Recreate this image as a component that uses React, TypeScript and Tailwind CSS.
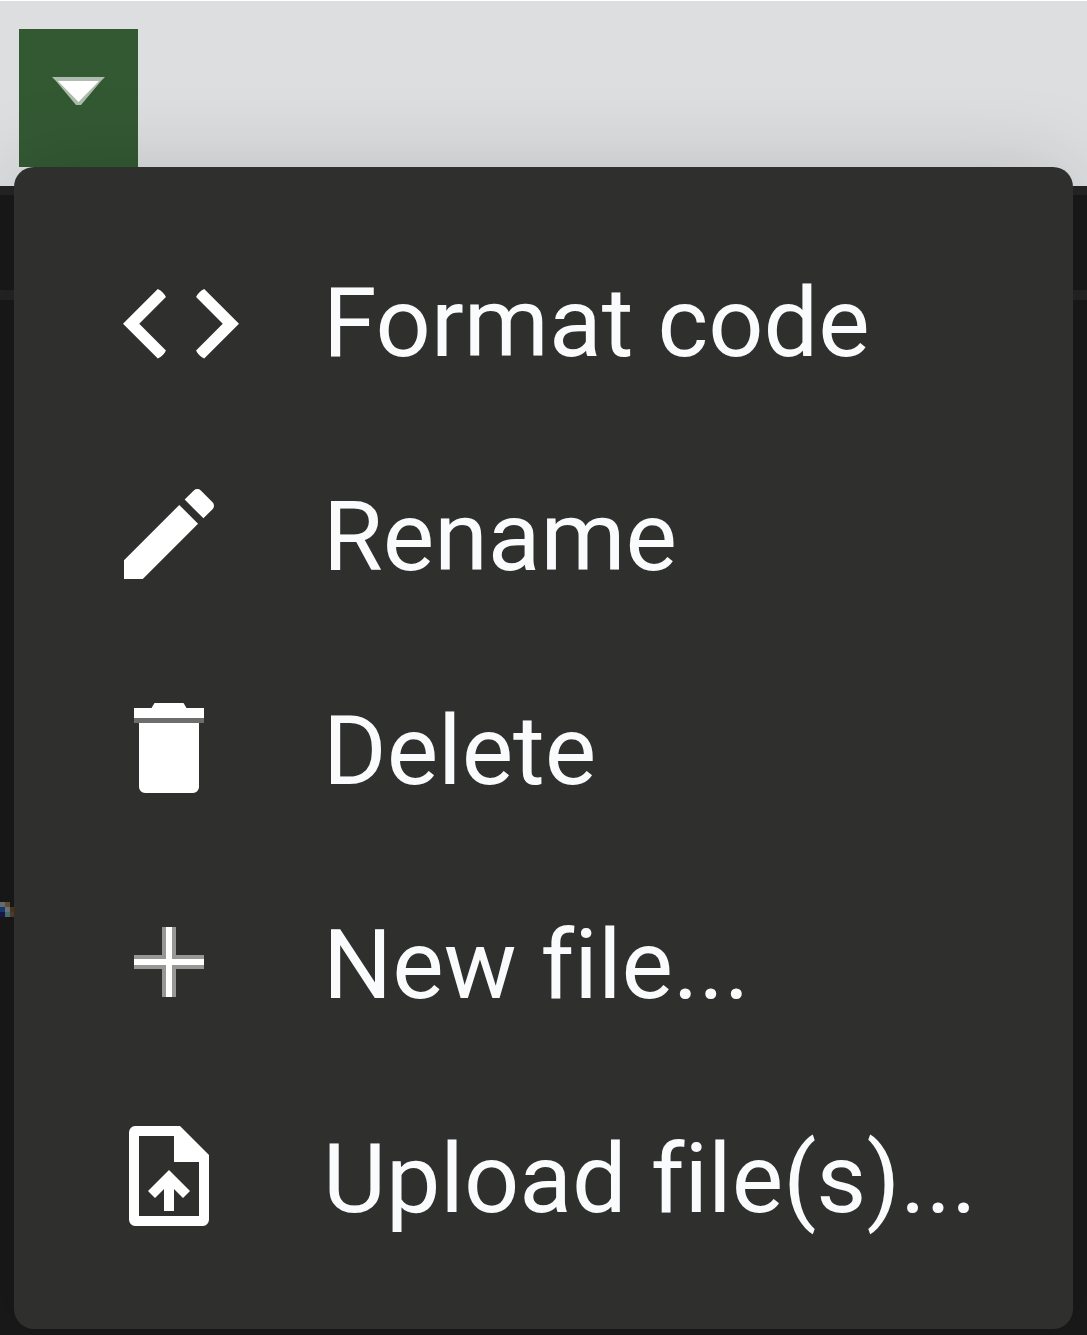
import type { ReactNode } from "react";

const icon = "h-[120px] w-[120px] fill-white";

const CodeIcon = () => (
  <svg viewBox="0 0 144 120" className="h-[120px] w-[144px] fill-white" aria-hidden="true">
    <path
      transform="translate(2.4 -5.8) scale(5.8)"
      d="M9.4 16.6L4.8 12l4.600-4.600Q9 6.500 8 6l-6 6 6 6Q9 17.500 9.400 16.600zM14.600 16.600l4.600-4.600-4.600-4.600Q15 6.500 16 6l6 6-6 6Q15 17.500 14.600 16.600z"
    />
  </svg>
);

const PencilIcon = () => (
  <svg viewBox="0 0 24 24" className={icon} aria-hidden="true">
    <path d="M3 17.25V21h3.75L17.81 9.94l-3.75-3.75L3 17.25zM20.71 7.04a1 1 0 0 0 0-1.41l-2.34-2.34a1 1 0 0 0-1.41 0l-1.83 1.83 3.75 3.75 1.83-1.83z" />
  </svg>
);

const TrashIcon = () => (
  <svg viewBox="0 0 24 24" className={icon} aria-hidden="true">
    <path d="M6 7h12v12.8a1.2 1.2 0 0 1-1.2 1.2H7.2A1.2 1.2 0 0 1 6 19.8zM19 4h-3.500l-.6-1H9.100l-.6 1H5v2h14z" />
    <path opacity="0.3" d="M5 6h14v1H5z" />
  </svg>
);

const PlusIcon = () => (
  <svg viewBox="0 0 120 120" className={icon} aria-hidden="true">
    <path opacity="0.5" d="M53 25h14v28h28v14H67v28H53V67H25V53h28z" />
    <path d="M57 25h6v32h32v6H63v32h-6V63H25v-6h32z" />
  </svg>
);

const UploadIcon = () => (
  <svg viewBox="0 0 24 24" className={icon} aria-hidden="true">
    <path d="M14.2 2H5.200A1.300 1.300 0 0 0 4 3.300v17.400A1.300 1.300 0 0 0 5.200 22H18.800A1.300 1.300 0 0 0 20 20.700V7.800zM18 20H6V4h7v5.200h5z" />
    <path d="M7.800 15l1.400 1.400L11 14.600V19h2v-4.400l1.800 1.800 1.400-1.400L12 10.800z" />
  </svg>
);

const items: { label: string; glyph: ReactNode }[] = [
  { label: "Format code", glyph: <CodeIcon /> },
  { label: "Rename", glyph: <PencilIcon /> },
  { label: "Delete", glyph: <TrashIcon /> },
  { label: "New file...", glyph: <PlusIcon /> },
  { label: "Upload file(s)...", glyph: <UploadIcon /> },
];

export default function App() {
  return (
    <div className="relative min-h-screen overflow-hidden bg-[#191919] font-[Roboto,sans-serif]">
      <header className="h-[186px] border-t border-white bg-[#dddee0] pt-7 pl-[19px]">
        <button
          type="button"
          aria-label="File actions"
          aria-haspopup="menu"
          aria-expanded="true"
          className="flex h-[138px] w-[119px] justify-center bg-[#335933] pt-12"
        >
          <svg viewBox="0 0 53 28" className="h-7 w-[53px] fill-white" aria-hidden="true">
            <path opacity="0.6" d="M0 0H53L49 4L29 28H24L4 4z" />
            <path d="M6 4H47L26.5 25z" />
          </svg>
        </button>
      </header>
      <div className="h-[114px] border-t-[9px] border-b-[10px] border-[#242424]" />
      <svg viewBox="0 0 14 15" className="absolute top-[902px] left-0 h-[15px] w-[14px]" aria-hidden="true">
        <path fill="#697276" d="M0 0h5v5H0z" />
        <path fill="#6b5037" d="M5 0h5v5H5z" />
        <path fill="#1b3c70" d="M0 5h5v5H0z" />
        <path fill="#6b7b85" d="M5 5h5v5H5z" />
        <path fill="#553519" d="M10 5h4v5h-4z" />
        <path fill="#1a1746" d="M0 10h5v5H0z" />
        <path fill="#4d7370" d="M5 10h5v5H5z" />
        <path fill="#54402b" d="M10 10h4v5h-4z" />
      </svg>
      <div
        role="menu"
        aria-label="File actions"
        className="absolute inset-x-3.5 top-[167px] rounded-[20px] bg-[#2f2f2d] py-[46px] shadow-[0_0_85px_rgba(0,0,0,0.15)]"
      >
        {items.map(({ label, glyph }) => (
          <button
            key={label}
            type="button"
            role="menuitem"
            className="flex h-[214px] w-full items-center pl-[95px] text-left text-[97px] leading-[112px] whitespace-nowrap text-[#fafbfc] [font-variant-ligatures:none]"
          >
            <span className="w-[214px] shrink-0">{glyph}</span>
            <span className="pt-1.5">{label}</span>
          </button>
        ))}
      </div>
    </div>
  );
}
